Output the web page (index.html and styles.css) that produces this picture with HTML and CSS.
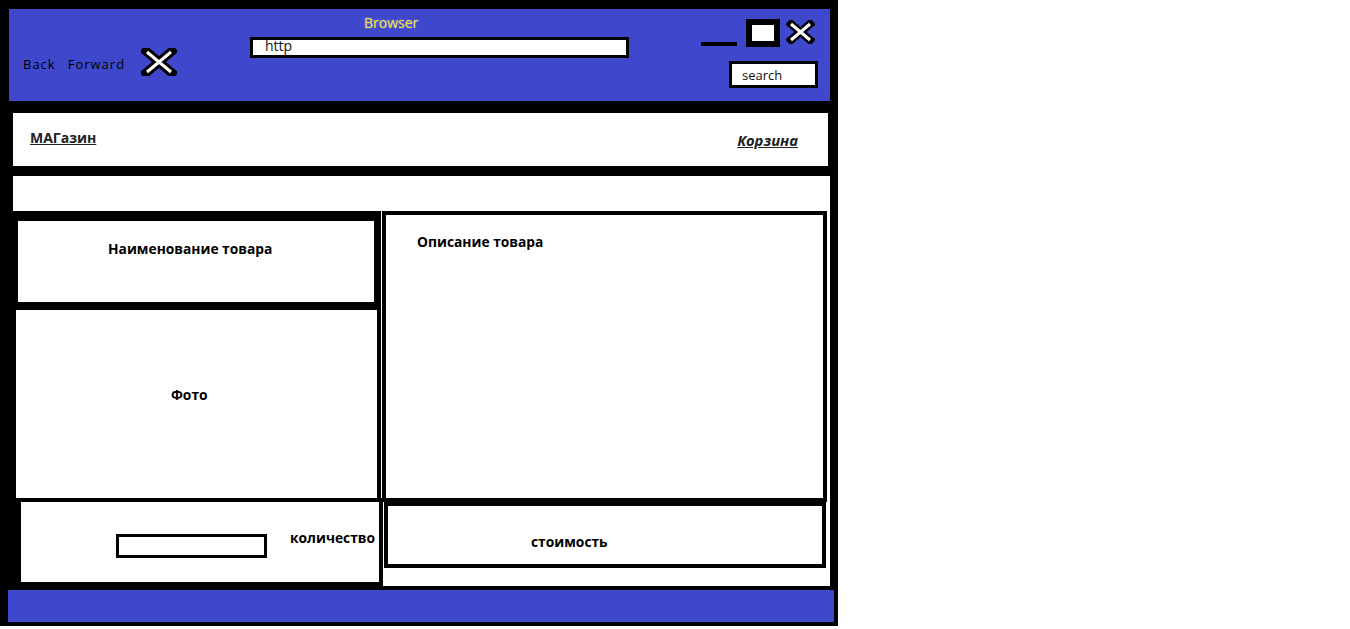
FILE: index.html
```html
<!DOCTYPE html>
<html lang="ru">
<head>
    <meta charset="UTF-8">
    <meta name="viewport" content="width=device-width, initial-scale=1.0">
    <title>МАГазин - макет</title>
    <link rel="stylesheet" href="styles.css">
</head>
<body>
    <div class="window">
        <!-- Шапка браузера -->
        <div class="browser-bar">
            <div class="nav-btns">
                <span class="nav-link">Back</span>
                <span class="nav-link">Forward</span>
                <svg class="cross-big" width="36" height="28" viewBox="0 0 36 28">
                    <path d="M5 3 L31 25 M31 3 L5 25" stroke="#000" stroke-width="9" stroke-linecap="square"/>
                    <path d="M6 4 L30 24 M30 4 L6 24" stroke="#fff" stroke-width="3"/>
                </svg>
            </div>
            <div class="address">
                <div class="title">Browser</div>
                <div class="url">http</div>
            </div>
            <div class="controls">
                <div class="win-btns">
                    <div class="minimize"></div>
                    <div class="maximize"></div>
                    <svg class="cross-small" width="29" height="24" viewBox="0 0 29 24">
                        <path d="M5 4 L24 20 M24 4 L5 20" stroke="#000" stroke-width="8" stroke-linecap="square"/>
                        <path d="M5 4 L24 20 M24 4 L5 20" stroke="#fff" stroke-width="3"/>
                    </svg>
                </div>
                <div class="search">search</div>
            </div>
        </div>

        <!-- Навигация магазина -->
        <div class="shop-nav">
            <a class="logo">МАГазин</a>
            <a class="cart">Корзина</a>
        </div>
        <div class="menu-bar"></div>

        <!-- Карточка товара -->
        <div class="content">
            <div class="left-col">
                <div class="name-box">Наименование товара</div>
                <div class="photo">Фото</div>
                <div class="qty">
                    <div class="qty-input"></div>
                    <span class="qty-label">количество</span>
                </div>
            </div>
            <div class="right-col">
                <div class="desc">Описание товара</div>
                <div class="price">стоимость</div>
            </div>
        </div>

        <div class="footer"></div>
    </div>
</body>
</html>
```

FILE: styles.css
```css
body {
    margin: 0;
    background: #fff;
    font-family: "Open Sans", "DejaVu Sans", sans-serif;
}
.window {
    width: 838px;
    height: 626px;
    box-sizing: border-box;
    padding: 9px 8px 0 9px;
    background: #000;
}
.browser-bar {
    display: flex;
    height: 92px;
    background: #3f48cc;
    padding: 0 12px 0 14px;
}
.nav-btns {
    display: flex;
    align-items: center;
    width: 227px;
    height: 28px;
    margin-top: 39px;
}
.nav-link {
    font-size: 13px;
    letter-spacing: 1px;
    color: #000;
    padding-top: 4px;
    margin-right: 12px;
}
.nav-link + .nav-link {
    margin-right: 16px;
}
.address {
    width: 379px;
}
.title {
    margin-top: 5px;
    padding-left: 114px;
    font-size: 14px;
    line-height: 18px;
    color: #f2e82a;
    text-shadow: 0 0 2px #8d93ff;
}
.url {
    margin-top: 5px;
    height: 21px;
    box-sizing: border-box;
    border: 3px solid #000;
    background: #fff;
    padding-left: 12px;
    font-size: 14px;
    line-height: 12px;
    color: #111;
}
.controls {
    margin-left: auto;
    width: 117px;
}
.win-btns {
    display: flex;
    align-items: flex-start;
    margin-top: 10px;
}
.minimize {
    width: 36px;
    height: 4px;
    margin-top: 23px;
    background: #000;
}
.maximize {
    width: 34px;
    height: 28px;
    box-sizing: border-box;
    margin-left: 9px;
    border: 6px solid #000;
    background: #fff;
}
.cross-small {
    margin-left: 6px;
    margin-top: 1px;
}
.search {
    margin: 14px 0 0 28px;
    height: 27px;
    box-sizing: border-box;
    border: 3px solid #000;
    background: #fff;
    padding-left: 10px;
    font-size: 13px;
    line-height: 22px;
    color: #111;
}
.shop-nav {
    display: flex;
    justify-content: space-between;
    height: 53px;
    margin: 12px 2px 0 4px;
    padding: 15px 30px 0 17px;
    box-sizing: border-box;
    background: #fff;
    font-size: 14px;
    font-weight: bold;
    color: #222;
}
.shop-nav a {
    text-decoration: underline;
}
.cart {
    font-size: 14.8px;
    font-style: italic;
    padding-top: 2px;
}
.menu-bar {
    height: 35px;
    margin: 10px 0 0 4px;
    background: #fff;
}
.content {
    display: grid;
    grid-template-columns: 368px 1fr;
    height: 375px;
    margin-left: 4px;
    background: #000;
    font-size: 13.8px;
    font-weight: bold;
}
.left-col {
    padding-top: 10px;
}
.name-box {
    width: 356px;
    height: 81px;
    box-sizing: border-box;
    margin-left: 5px;
    padding: 18px 0 0 90px;
    background: #fff;
}
.photo {
    width: 361px;
    height: 188px;
    box-sizing: border-box;
    margin: 8px 0 0 3px;
    padding: 75px 0 0 155px;
    background: #fff;
}
.qty {
    position: relative;
    z-index: 1;
    display: flex;
    align-items: flex-start;
    width: 366px;
    height: 88px;
    box-sizing: border-box;
    margin-left: 4px;
    border: 4px solid #000;
    background: #fff;
}
.qty-input {
    width: 151px;
    height: 24px;
    box-sizing: border-box;
    margin: 32px 0 0 95px;
    border: 3px solid #000;
}
.qty-label {
    margin: 26px 0 0 23px;
}
.right-col {
    background: #fff;
}
.desc {
    width: 445px;
    height: 291px;
    box-sizing: border-box;
    margin-left: 1px;
    border: 4px solid #000;
    padding: 17px 0 0 31px;
}
.price {
    width: 442px;
    height: 66px;
    box-sizing: border-box;
    margin-left: 3px;
    border: 4px solid #000;
    padding: 26px 0 0 143px;
}
.footer {
    height: 40px;
    box-sizing: border-box;
    margin: 0 -8px 0 -5px;
    border: 4px solid #000;
    background: #3f48cc;
}
```
